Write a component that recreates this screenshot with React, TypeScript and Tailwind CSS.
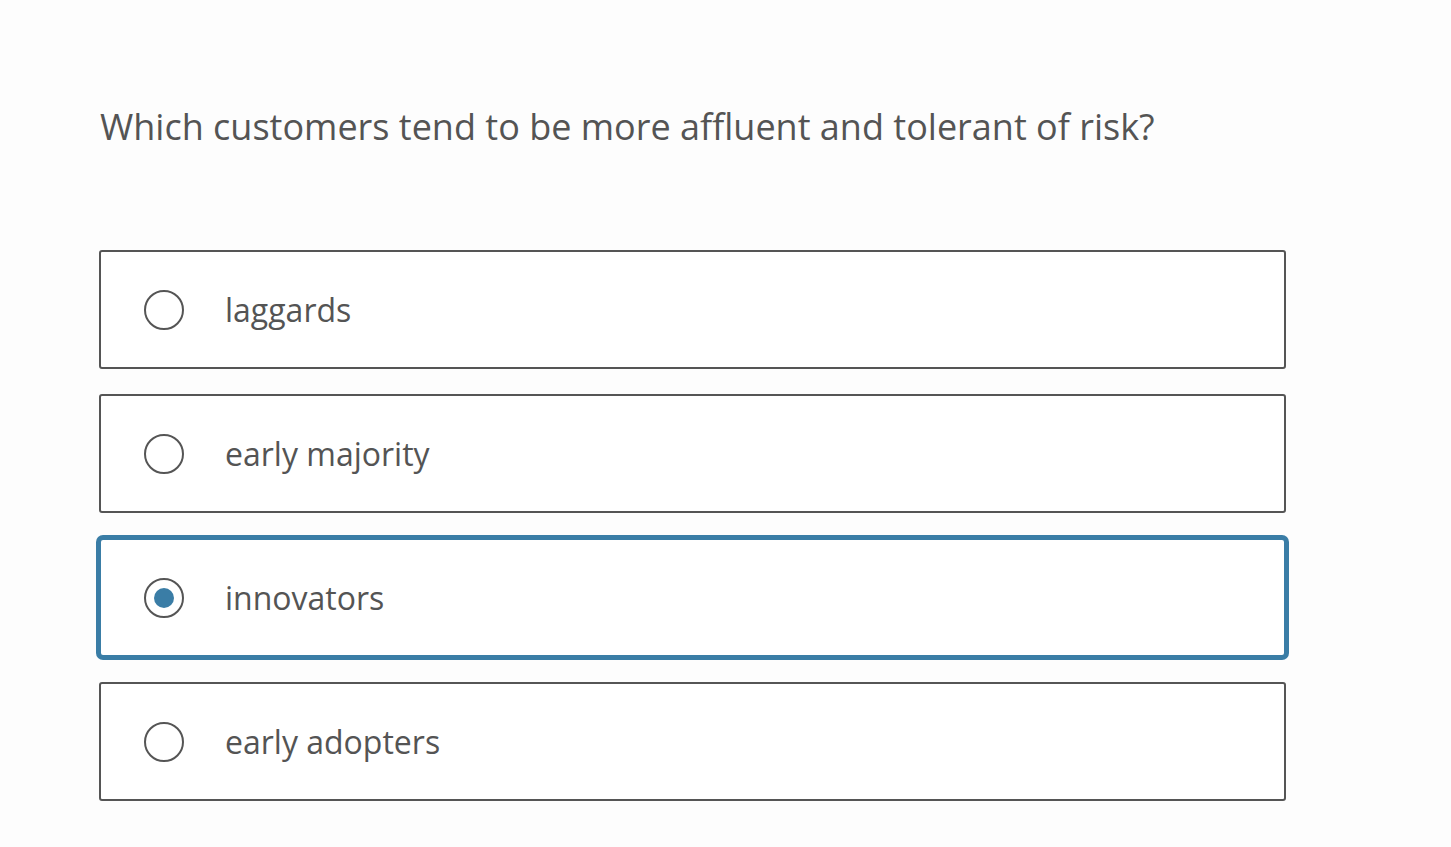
import { useState } from "react";

const OPTIONS = ["laggards", "early majority", "innovators", "early adopters"];

export default function App() {
  const [picked, setPicked] = useState("innovators");

  return (
    <div className="min-h-screen bg-[#fdfdfd] font-['Open_Sans',sans-serif] text-[#545454]">
      <div className="pl-[100px] pt-[104px]">
        <h1 className="text-[36px] leading-[46px] font-normal">
          Which customers tend to be more affluent and tolerant of risk?
        </h1>

        <div className="-ml-px mt-[100px] flex w-[1187px] flex-col gap-[25px]">
          {OPTIONS.map((opt) => {
            const on = opt === picked;
            return (
              <label
                key={opt}
                onClick={() => setPicked(opt)}
                className={
                  on
                    ? "flex h-[119px] cursor-pointer items-center rounded-[4px] border-2 border-[#3a7da6] bg-white ring-[3px] ring-[#3a7da6]"
                    : "flex h-[119px] cursor-pointer items-center rounded-[3px] border-2 border-[#555] bg-white"
                }
              >
                <span className="ml-[43px] flex h-[40px] w-[40px] items-center justify-center rounded-full border-2 border-[#555]">
                  {on && <span className="h-[20px] w-[20px] rounded-full bg-[#3a7da6]" />}
                </span>
                <span className="ml-[41px] text-[32px] leading-none">{opt}</span>
              </label>
            );
          })}
        </div>
      </div>
    </div>
  );
}
